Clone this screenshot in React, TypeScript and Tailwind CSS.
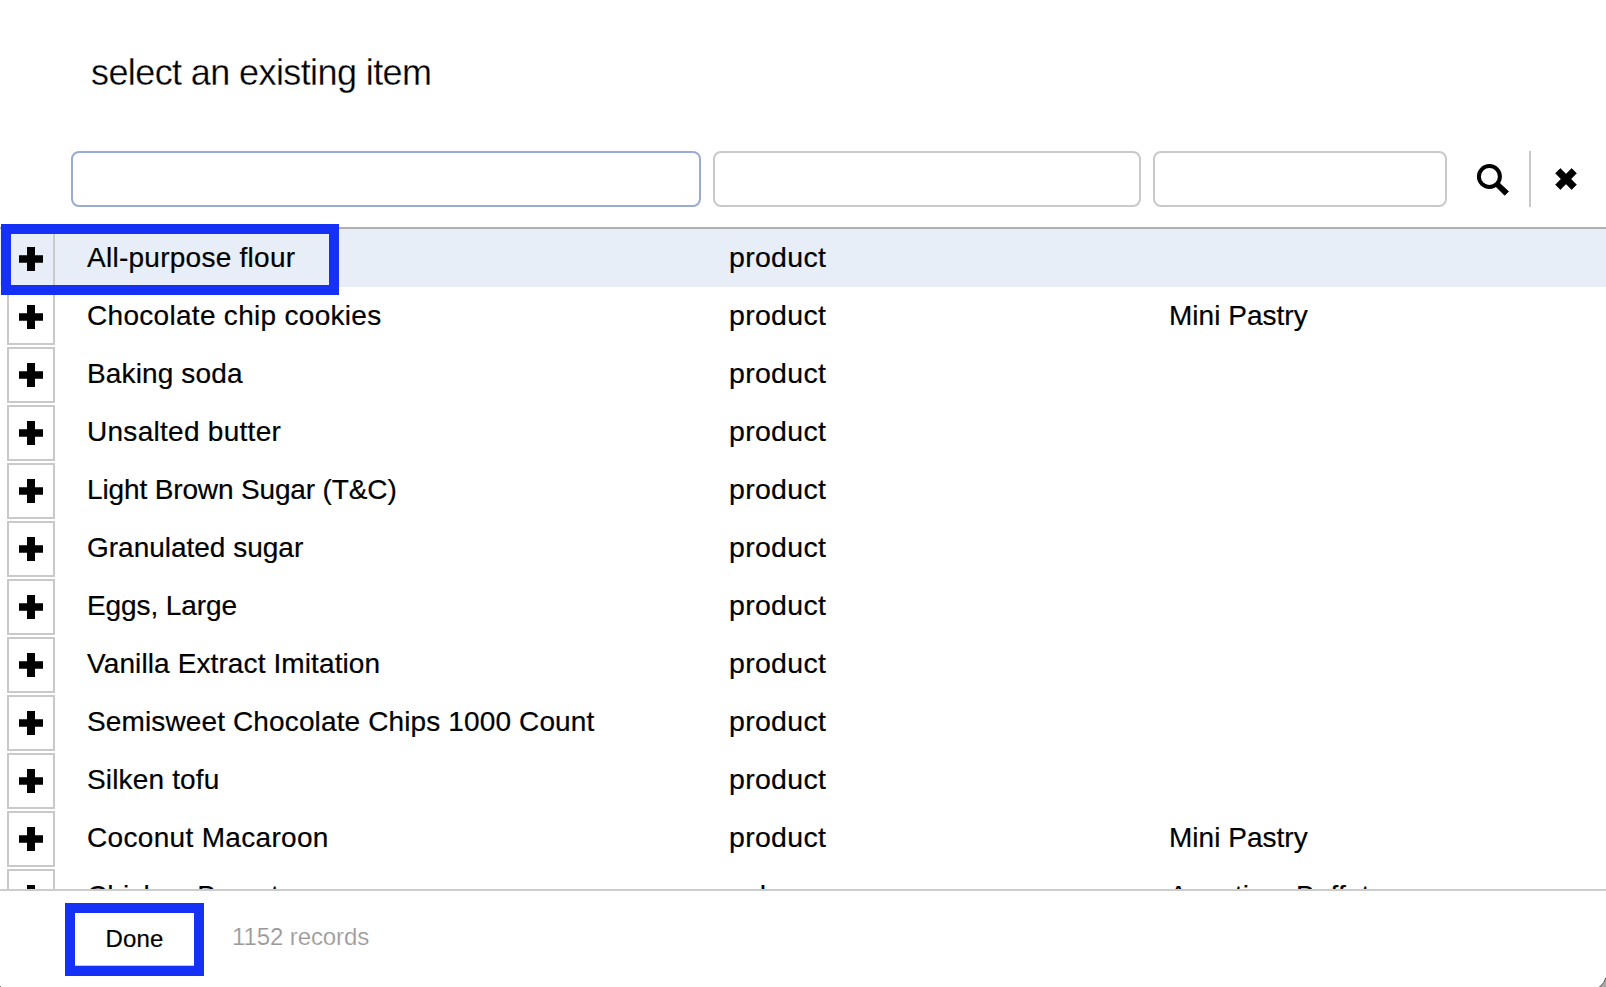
type Item = { name: string; nameClass: string; kind: string; group?: string; groupClass?: string };

const items: Item[] = [
  { name: "All-purpose flour", nameClass: "tracking-[0.26px]", kind: "product" },
  { name: "Chocolate chip cookies", nameClass: "tracking-[0.3px]", kind: "product", group: "Mini Pastry", groupClass: "tracking-[0.02px]" },
  { name: "Baking soda", nameClass: "tracking-[0.14px]", kind: "product" },
  { name: "Unsalted butter", nameClass: "tracking-[0.28px]", kind: "product" },
  { name: "Light Brown Sugar (T&C)", nameClass: "tracking-[-0.14px]", kind: "product" },
  { name: "Granulated sugar", nameClass: "tracking-[-0.01px]", kind: "product" },
  { name: "Eggs, Large", nameClass: "tracking-[-0.09px]", kind: "product" },
  { name: "Vanilla Extract Imitation", nameClass: "tracking-[0.11px]", kind: "product" },
  { name: "Semisweet Chocolate Chips 1000 Count", nameClass: "tracking-[0.13px]", kind: "product" },
  { name: "Silken tofu", nameClass: "tracking-[0.16px]", kind: "product" },
  { name: "Coconut Macaroon", nameClass: "tracking-[0.32px]", kind: "product", group: "Mini Pastry", groupClass: "tracking-[0.02px]" },
  { name: "Chicken Breast", nameClass: "tracking-[0.15px]", kind: "sale", group: "Appetizer Buffet", groupClass: "tracking-[0.1px]" },
];

function PlusIcon() {
  return (
    <svg width="24" height="24" viewBox="0 0 24 24" aria-hidden="true">
      <path d="M8 0h8v8.2h8v7.6h-8V24H8v-8.2H0V8.2h8z" fill="#000" />
    </svg>
  );
}

function SearchIcon() {
  return (
    <svg width="34" height="34" viewBox="0 0 34 34" aria-hidden="true">
      <circle cx="13.4" cy="13.5" r="10.5" fill="none" stroke="#000" strokeWidth="4" />
      <path d="M20.2 23.8 L23.6 20.2 L32.5 28.4 L28.7 32.3 Z" fill="#000" stroke="#000" strokeWidth="0.8" strokeLinejoin="round" />
      <path d="M19.8 19.6 L22.6 22.4" stroke="#000" strokeWidth="5" />
    </svg>
  );
}

function CloseIcon() {
  return (
    <svg width="22" height="22" viewBox="0 0 22 22" aria-hidden="true">
      <path
        d="M5.3 0.6 L11 6.2 L16.7 0.6 L21.4 5.3 L15.8 11 L21.4 16.7 L16.7 21.4 L11 15.8 L5.3 21.4 L0.6 16.7 L6.2 11 L0.6 5.3 Z"
        fill="#000"
        stroke="#000"
        strokeWidth="0.7"
        strokeLinejoin="round"
      />
    </svg>
  );
}

function Row({ item, active }: { item: Item; active: boolean }) {
  return (
    <li className={active ? "flex h-[58px] bg-[#e7eef8]" : "flex h-[58px] bg-white"}>
      <button
        type="button"
        aria-label={"Add " + item.name}
        className="mt-[2px] ml-[7px] flex h-14 w-12 shrink-0 items-center justify-center border-2 border-[#c9c9c9]"
      >
        <PlusIcon />
      </button>
      <span className={"ml-[32px] w-[642px] shrink-0 whitespace-pre leading-[57px] " + item.nameClass}>{item.name}</span>
      <span className="w-[440px] shrink-0 text-[28.5px] leading-[56px] tracking-[0.3px]">{item.kind}</span>
      <span className={"leading-[57px] " + (item.groupClass ?? "")}>{item.group}</span>
    </li>
  );
}

export default function App() {
  return (
    <div className="relative flex h-[987px] w-[1606px] flex-col overflow-hidden bg-white font-['Liberation_Sans',Arial,sans-serif] text-black">
      <header className="flex h-[229px] shrink-0 flex-col border-b-2 border-[#b0b0b0]">
        <h1 className="mt-[53px] ml-[91px] h-10 text-[36px] leading-10 font-normal tracking-[-0.6px] [-webkit-text-stroke:0.3px_white]">
          select an existing item
        </h1>
        <div className="mt-[58px] ml-[71px] flex h-14">
          <input className="h-14 w-[630px] rounded-lg border-2 border-[#9aaad6] bg-white outline-none" />
          <input className="ml-3 h-14 w-[428px] rounded-lg border-2 border-[#c9c9c9] bg-white outline-none" />
          <input className="ml-3 h-14 w-[294px] rounded-lg border-2 border-[#c9c9c9] bg-white outline-none" />
          <button type="button" aria-label="Search" className="flex w-[84px] items-start justify-start border-r-2 border-[#c9c9c9] pt-3 pl-[29px]">
            <SearchIcon />
          </button>
          <button type="button" aria-label="Close" className="flex items-start pt-[17px] pl-6">
            <CloseIcon />
          </button>
        </div>
      </header>

      <ul className="h-[660px] shrink-0 overflow-hidden text-[28px] [-webkit-text-stroke:0.2px_black]">
        {items.map((item, i) => (
          <Row key={item.name} item={item} active={i === 0} />
        ))}
      </ul>

      <footer className="flex flex-1 items-start border-t-2 border-[#cccccc] bg-white text-2xl">
        <div className="mt-3 ml-[65px] h-[73px] w-[139px] border-[10px] border-[#1531f7]">
          <button
            type="button"
            className="flex h-[53px] w-full items-start justify-center border-b border-[#c9c9c9] leading-[51px] tracking-[0.1px] [-webkit-text-stroke:0.2px_black]"
          >
            Done
          </button>
        </div>
        <span className="mt-3 ml-[28px] leading-[68px] tracking-[-0.1px] text-[#999999] [-webkit-text-stroke:0.2px_white]">1152 records</span>
      </footer>

      <div className="pointer-events-none absolute top-[224px] left-px h-[71px] w-[338px] border-[10px] border-[#1531f7]" />
      <svg className="absolute right-0 bottom-0" width="8" height="10" viewBox="0 0 8 10" aria-hidden="true">
        <path d="M8 0.5 Q6.5 6 1.5 10 H8 Z" fill="#a8a8a8" />
        <path d="M8 0.5 Q6.5 6 1.5 10" fill="none" stroke="#555" strokeWidth="1" />
      </svg>
      <div className="absolute bottom-0 left-0 size-px bg-[#777777]" />
    </div>
  );
}
